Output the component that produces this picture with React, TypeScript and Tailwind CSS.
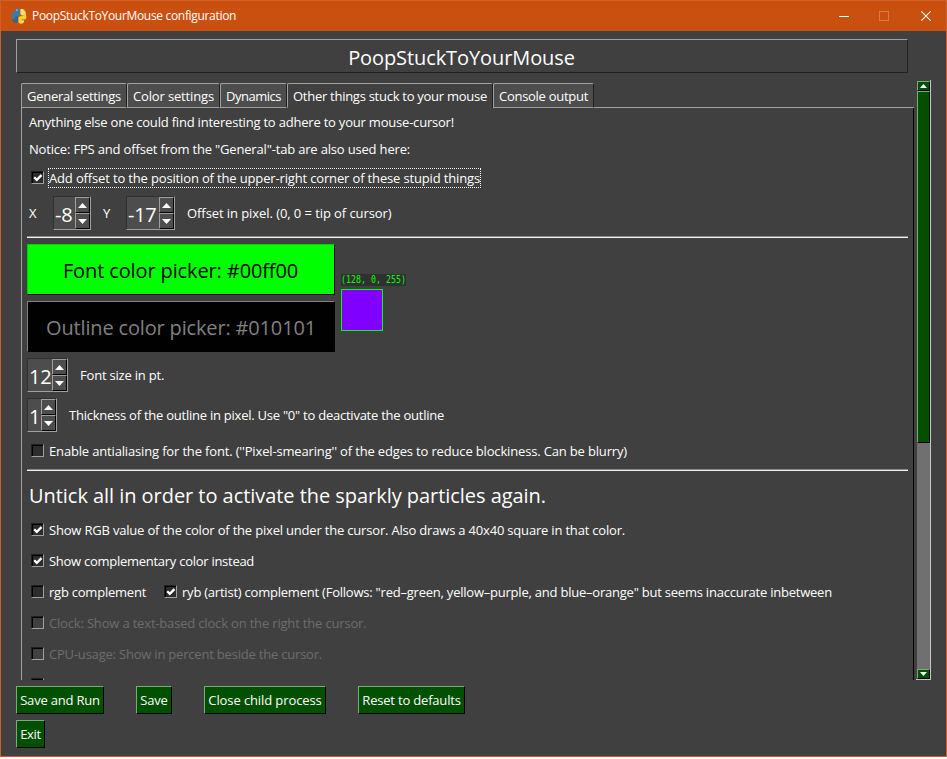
import React from "react";
import clsx from "clsx";

function TitleBar() {
  return (
    <div className="flex h-[30px] shrink-0 items-center bg-[#ca5010] pl-[10px] text-[12px] text-white">
      <svg width="16" height="16" viewBox="0 0 16 16" className="shrink-0">
        <path d="M4 1.5Q4 .3 6 .3H7.5Q9 .3 9 2V6.5Q9 8 7.5 8H5.5Q4 8 4 9.5V11.5H2Q.3 11 .3 8Q.3 4.5 2.3 4.3H6.3V3.6H4Z" fill="#3d7aa8" />
        <path d="M.8 11.2H4.2V9.5Q4.2 8.2 5.5 8.2H7V13.5Q6.5 15.2 4.5 14.8Q1.8 14 .8 11.2Z" fill="#2f6690" />
        <path d="M9.3 1.2Q11 .4 12.6 1.4Q14.6 3 15 5.3Q13.8 7.6 11.5 7.8Q9.3 7 9.3 5Z" fill="#ffe06a" />
        <path d="M14.8 5.6Q16 9 14.6 11.5H10.5V12.3H13V14Q12.4 15.7 10 15.7Q7.6 15.6 7.4 14V9.8Q7.6 8.3 9.4 8.2H11.5Q13.3 8 13.3 5.6Z" fill="#ffd43b" />
        <rect x="5.3" y="1.5" width="1.2" height="1.2" fill="#dfe8ee" />
        <rect x="10.6" y="13.3" width="1.2" height="1.2" fill="#fff6cf" />
      </svg>
      <span className="ml-[5px] whitespace-nowrap tracking-[-0.32px]">PoopStuckToYourMouse configuration</span>
      <svg width="92" height="12" viewBox="0 0 92 12" className="mr-[15px] ml-auto" fill="none" shapeRendering="crispEdges">
        <path d="M0 6.5H10" stroke="#fff" />
        <rect x="40.5" y="1.5" width="9" height="9" stroke="#d87b4b" />
        <path d="M82.3 1.3L91.7 10.7M91.7 1.3L82.3 10.7" stroke="#fff" strokeWidth="1.1" shapeRendering="auto" />
      </svg>
    </div>
  );
}

function Tab({ label, width, track, active = false }: { label: string; width: string; track: string; active?: boolean }) {
  return (
    <div
      className={clsx(
        "flex h-full items-center whitespace-nowrap rounded-t-[2px] border border-t-[#a0a0a0] border-r-[#202020] border-l-[#a0a0a0] pt-[2px] pl-[5px]",
        active ? "border-b-[#404040] bg-[#404040]" : "border-b-[#a0a0a0] bg-[#4d4d4d]",
        width,
        track,
      )}
    >
      {label}
    </div>
  );
}

function Check({ label, track, checked = false, disabled = false, focused = false }: { label: string; track: string; checked?: boolean; disabled?: boolean; focused?: boolean }) {
  return (
    <div className="flex h-[20px] items-start">
      <span className="mt-[3px] h-[13px] w-[13px] shrink-0 border border-t-[#202020] border-r-[#a0a0a0] border-b-[#a0a0a0] border-l-[#202020]">
        <span className={clsx("block h-full w-full border-t border-l border-black", disabled ? "bg-[#404040]" : "bg-[#2c2c2c]")}>
          {checked && (
            <svg width="10" height="10" viewBox="0 0 10 10" className="block" fill="none">
              <path d="M1.2 4.2L3.8 6.8L8.5 2.1" stroke="#fff" strokeWidth="2.3" />
            </svg>
          )}
        </span>
      </span>
      <span
        className={clsx(
          "ml-[4px] flex h-[20px] items-center whitespace-nowrap border border-dotted pt-[2px]",
          focused ? "border-white" : "border-transparent",
          disabled && "text-[#6d6d6d]",
          track,
        )}
      >
        {label}
      </span>
    </div>
  );
}

function Arrow({ up = false }: { up?: boolean }) {
  return (
    <svg width="9" height="5" viewBox="0 0 9 5" className="block">
      <path d={up ? "M4.5 0L9 5H0Z" : "M0 0H9L4.5 5Z"} fill="#fff" />
    </svg>
  );
}

function Spin({ value, width }: { value: string; width: string }) {
  return (
    <div className={clsx("flex h-[34px] shrink-0 border border-t-[#303030] border-r-[#a0a0a0] border-b-[#a0a0a0] border-l-[#303030] bg-[#4d4d4d]", width)}>
      <span className="flex-1 pt-[2px] pl-[1px] text-[20px] leading-[30px] tracking-[-0.3px]">
        <span className="block h-[30px] pt-[1px]">{value}</span>
      </span>
      <span className="flex w-[15px] flex-col">
        {[true, false].map((up) => (
          <span key={String(up)} className="flex h-[16px] items-center justify-center border border-t-[#a0a0a0] border-r-black border-b-black border-l-[#a0a0a0]">
            <Arrow up={up} />
          </span>
        ))}
      </span>
    </div>
  );
}

function Rule() {
  return <div className="ml-[5px] h-[2px] w-[881px] border-t border-[#8a8a8a] bg-[#f0f0f0]" />;
}

function GreenButton({ label, width, track }: { label: string; width: string; track: string }) {
  return (
    <button className={clsx("flex h-[28px] items-center justify-center whitespace-nowrap border border-t-[#7fa87f] border-r-black border-b-black border-l-[#7fa87f] bg-[#005000] pt-[2px]", width, track)}>
      {label}
    </button>
  );
}

function ScrollBar() {
  const cap = "flex h-[10px] w-[13px] shrink-0 items-center justify-center border border-t-[#7fa87f] border-r-black border-b-black border-l-[#7fa87f] bg-[#005000]";
  return (
    <div className="ml-[2px] flex h-[600px] w-[15px] flex-col border-r border-b border-[#c8c8c8] pt-[1px] pl-[1px]">
      <div className={cap}>
        <svg width="7" height="4" viewBox="0 0 7 4"><path d="M3.5 0L7 4H0Z" fill="#fff" /></svg>
      </div>
      <div className="w-[13px] flex-1 bg-[#707070]">
        <div className="h-[352px] border border-t-[#7fa87f] border-r-black border-b-black border-l-[#7fa87f] bg-[#005000]" />
      </div>
      <div className={cap}>
        <svg width="7" height="4" viewBox="0 0 7 4"><path d="M0 0H7L3.5 4Z" fill="#fff" /></svg>
      </div>
    </div>
  );
}

function CursorReadout() {
  return (
    <div className="absolute top-[273px] left-[340px]">
      <div className="h-[12px] w-[65px] bg-[#303030]">
        <div className="w-[88px] origin-left scale-x-[0.755] whitespace-pre font-['DejaVu_Sans_Mono',monospace] text-[11px] leading-[12px] text-[#00ff00]">(128, 0, 255)</div>
      </div>
      <div className="mt-[3px] h-[42px] w-[42px] border border-[#00ff00] bg-[#8000ff]" />
    </div>
  );
}

function PaneContent() {
  return (
    <div className="h-[572px] w-[893px] overflow-hidden border-r border-l border-r-black border-l-[#a0a0a0]">
      <div className="mt-[4px] ml-[7px] h-[20px] whitespace-nowrap leading-[20px] tracking-[-0.205px]">Anything else one could find interesting to adhere to your mouse-cursor!</div>
      <div className="mt-[7px] ml-[7px] h-[20px] whitespace-nowrap leading-[20px] tracking-[-0.176px]">Notice: FPS and offset from the "General"-tab are also used here:</div>
      <div className="mt-[9px] ml-[9px]">
        <Check label="Add offset to the position of the upper-right corner of these stupid things" track="tracking-[-0.152px]" checked focused />
      </div>
      <div className="mt-[8px] flex items-center pl-[7px]">
        <span className="w-[24px] pt-[2px]">X</span>
        <Spin value="-8" width="w-[38px]" />
        <span className="ml-[12px] w-[23px] pt-[2px]">Y</span>
        <Spin value="-17" width="w-[49px]" />
        <span className="ml-[12px] pt-[2px] whitespace-nowrap tracking-[-0.075px]">Offset in pixel. (0, 0 = tip of cursor)</span>
      </div>
      <div className="mt-[6px]"><Rule /></div>
      <button className="mt-[6px] ml-[5px] flex h-[51px] w-[308px] items-center justify-center whitespace-nowrap border border-t-[#00d000] border-r-black border-b-black border-l-[#00d000] bg-[#00ff00] pt-[2px] pr-[1px] text-[20px] tracking-[-0.12px] text-[#010101]">
        Font color picker: #00ff00
      </button>
      <button className="mt-[6px] ml-[5px] flex h-[51px] w-[308px] items-center justify-center whitespace-nowrap border border-t-[#808080] border-r-black border-b-black border-l-[#808080] bg-[#010101] pt-[2px] text-[20px] tracking-[-0.16px] text-[#808080]">
        Outline color picker: #010101
      </button>
      <div className="mt-[6px] flex items-center pl-[5px]">
        <Spin value="12" width="w-[41px]" />
        <span className="ml-[12px] pt-[2px] whitespace-nowrap tracking-[-0.2px]">Font size in pt.</span>
      </div>
      <div className="mt-[6px] flex items-center pl-[5px]">
        <Spin value="1" width="w-[30px]" />
        <span className="ml-[12px] pt-[2px] whitespace-nowrap tracking-[-0.243px]">Thickness of the outline in pixel. Use "0" to deactivate the outline</span>
      </div>
      <div className="mt-[9px] ml-[9px]">
        <Check label="Enable antialiasing for the font. (''Pixel-smearing'' of the edges to reduce blockiness. Can be blurry)" track="tracking-[-0.16px]" />
      </div>
      <div className="mt-[8px]"><Rule /></div>
      <div className="mt-[9px] ml-[7px] h-[32px] whitespace-nowrap text-[20px] leading-[32px] tracking-[-0.045px]">Untick all in order to activate the sparkly particles again.</div>
      <div className="mt-[8px] ml-[9px] flex flex-col gap-[11px]">
        <Check label="Show RGB value of the color of the pixel under the cursor. Also draws a 40x40 square in that color." track="tracking-[-0.19px]" checked />
        <Check label="Show complementary color instead" track="tracking-[-0.272px]" checked />
        <div className="flex">
          <div className="w-[133px]"><Check label="rgb complement" track="tracking-[-0.23px]" /></div>
          <Check label={'ryb (artist) complement (Follows: "red–green, yellow–purple, and blue–orange" but seems inaccurate inbetween'} track="tracking-[-0.224px]" checked />
        </div>
        <Check label="Clock: Show a text-based clock on the right the cursor." track="tracking-[-0.175px]" disabled />
        <Check label="CPU-usage: Show in percent beside the cursor." track="tracking-[-0.203px]" disabled />
        <div className="h-[20px] pt-[3px]">
          <div className="h-[13px] w-[13px] border border-t-[#202020] border-r-[#a0a0a0] border-b-[#a0a0a0] border-l-[#202020]">
            <div className="h-full border-t border-l border-black" />
          </div>
        </div>
      </div>
    </div>
  );
}

export default function App() {
  return (
    <div className="relative flex h-[757px] w-[947px] flex-col border border-[#d0602a] bg-[#404040] font-['Open_Sans','Noto_Sans',sans-serif] text-[13px] text-white">
      <TitleBar />
      <div className="mt-[8px] ml-[15px] flex h-[34px] w-[892px] items-center justify-center border border-t-[#a0a0a0] border-r-[#202020] border-b-[#202020] border-l-[#a0a0a0] pt-[3px] pr-[1px] text-[20px] tracking-[-0.09px]">
        PoopStuckToYourMouse
      </div>
      <div className="mt-[7px] flex h-[600px] pl-[20px]">
        <div className="w-[893px] pt-[3px]">
          <div className="flex h-[25px]">
            <Tab label="General settings" width="w-[106px]" track="tracking-[-0.28px]" />
            <Tab label="Color settings" width="w-[93px]" track="tracking-[-0.15px]" />
            <Tab label="Dynamics" width="w-[67px]" track="tracking-[-0.48px]" />
            <Tab label="Other things stuck to your mouse" width="w-[206px]" track="tracking-[-0.27px]" active />
            <Tab label="Console output" width="w-[101px]" track="tracking-[-0.28px]" />
            <div className="flex-1 border-b border-[#a0a0a0]" />
          </div>
          <PaneContent />
        </div>
        <ScrollBar />
      </div>
      <div className="mt-[6px] flex gap-[32px] pl-[15px]">
        <GreenButton label="Save and Run" width="w-[88px]" track="tracking-[-0.2px]" />
        <GreenButton label="Save" width="w-[36px]" track="tracking-[-0.16px]" />
        <GreenButton label="Close child process" width="w-[122px]" track="tracking-[-0.1px]" />
        <GreenButton label="Reset to defaults" width="w-[107px]" track="tracking-[-0.19px]" />
      </div>
      <div className="mt-[6px] pl-[15px]">
        <GreenButton label="Exit" width="w-[29px]" track="tracking-[-0.3px]" />
      </div>
      <CursorReadout />
    </div>
  );
}
